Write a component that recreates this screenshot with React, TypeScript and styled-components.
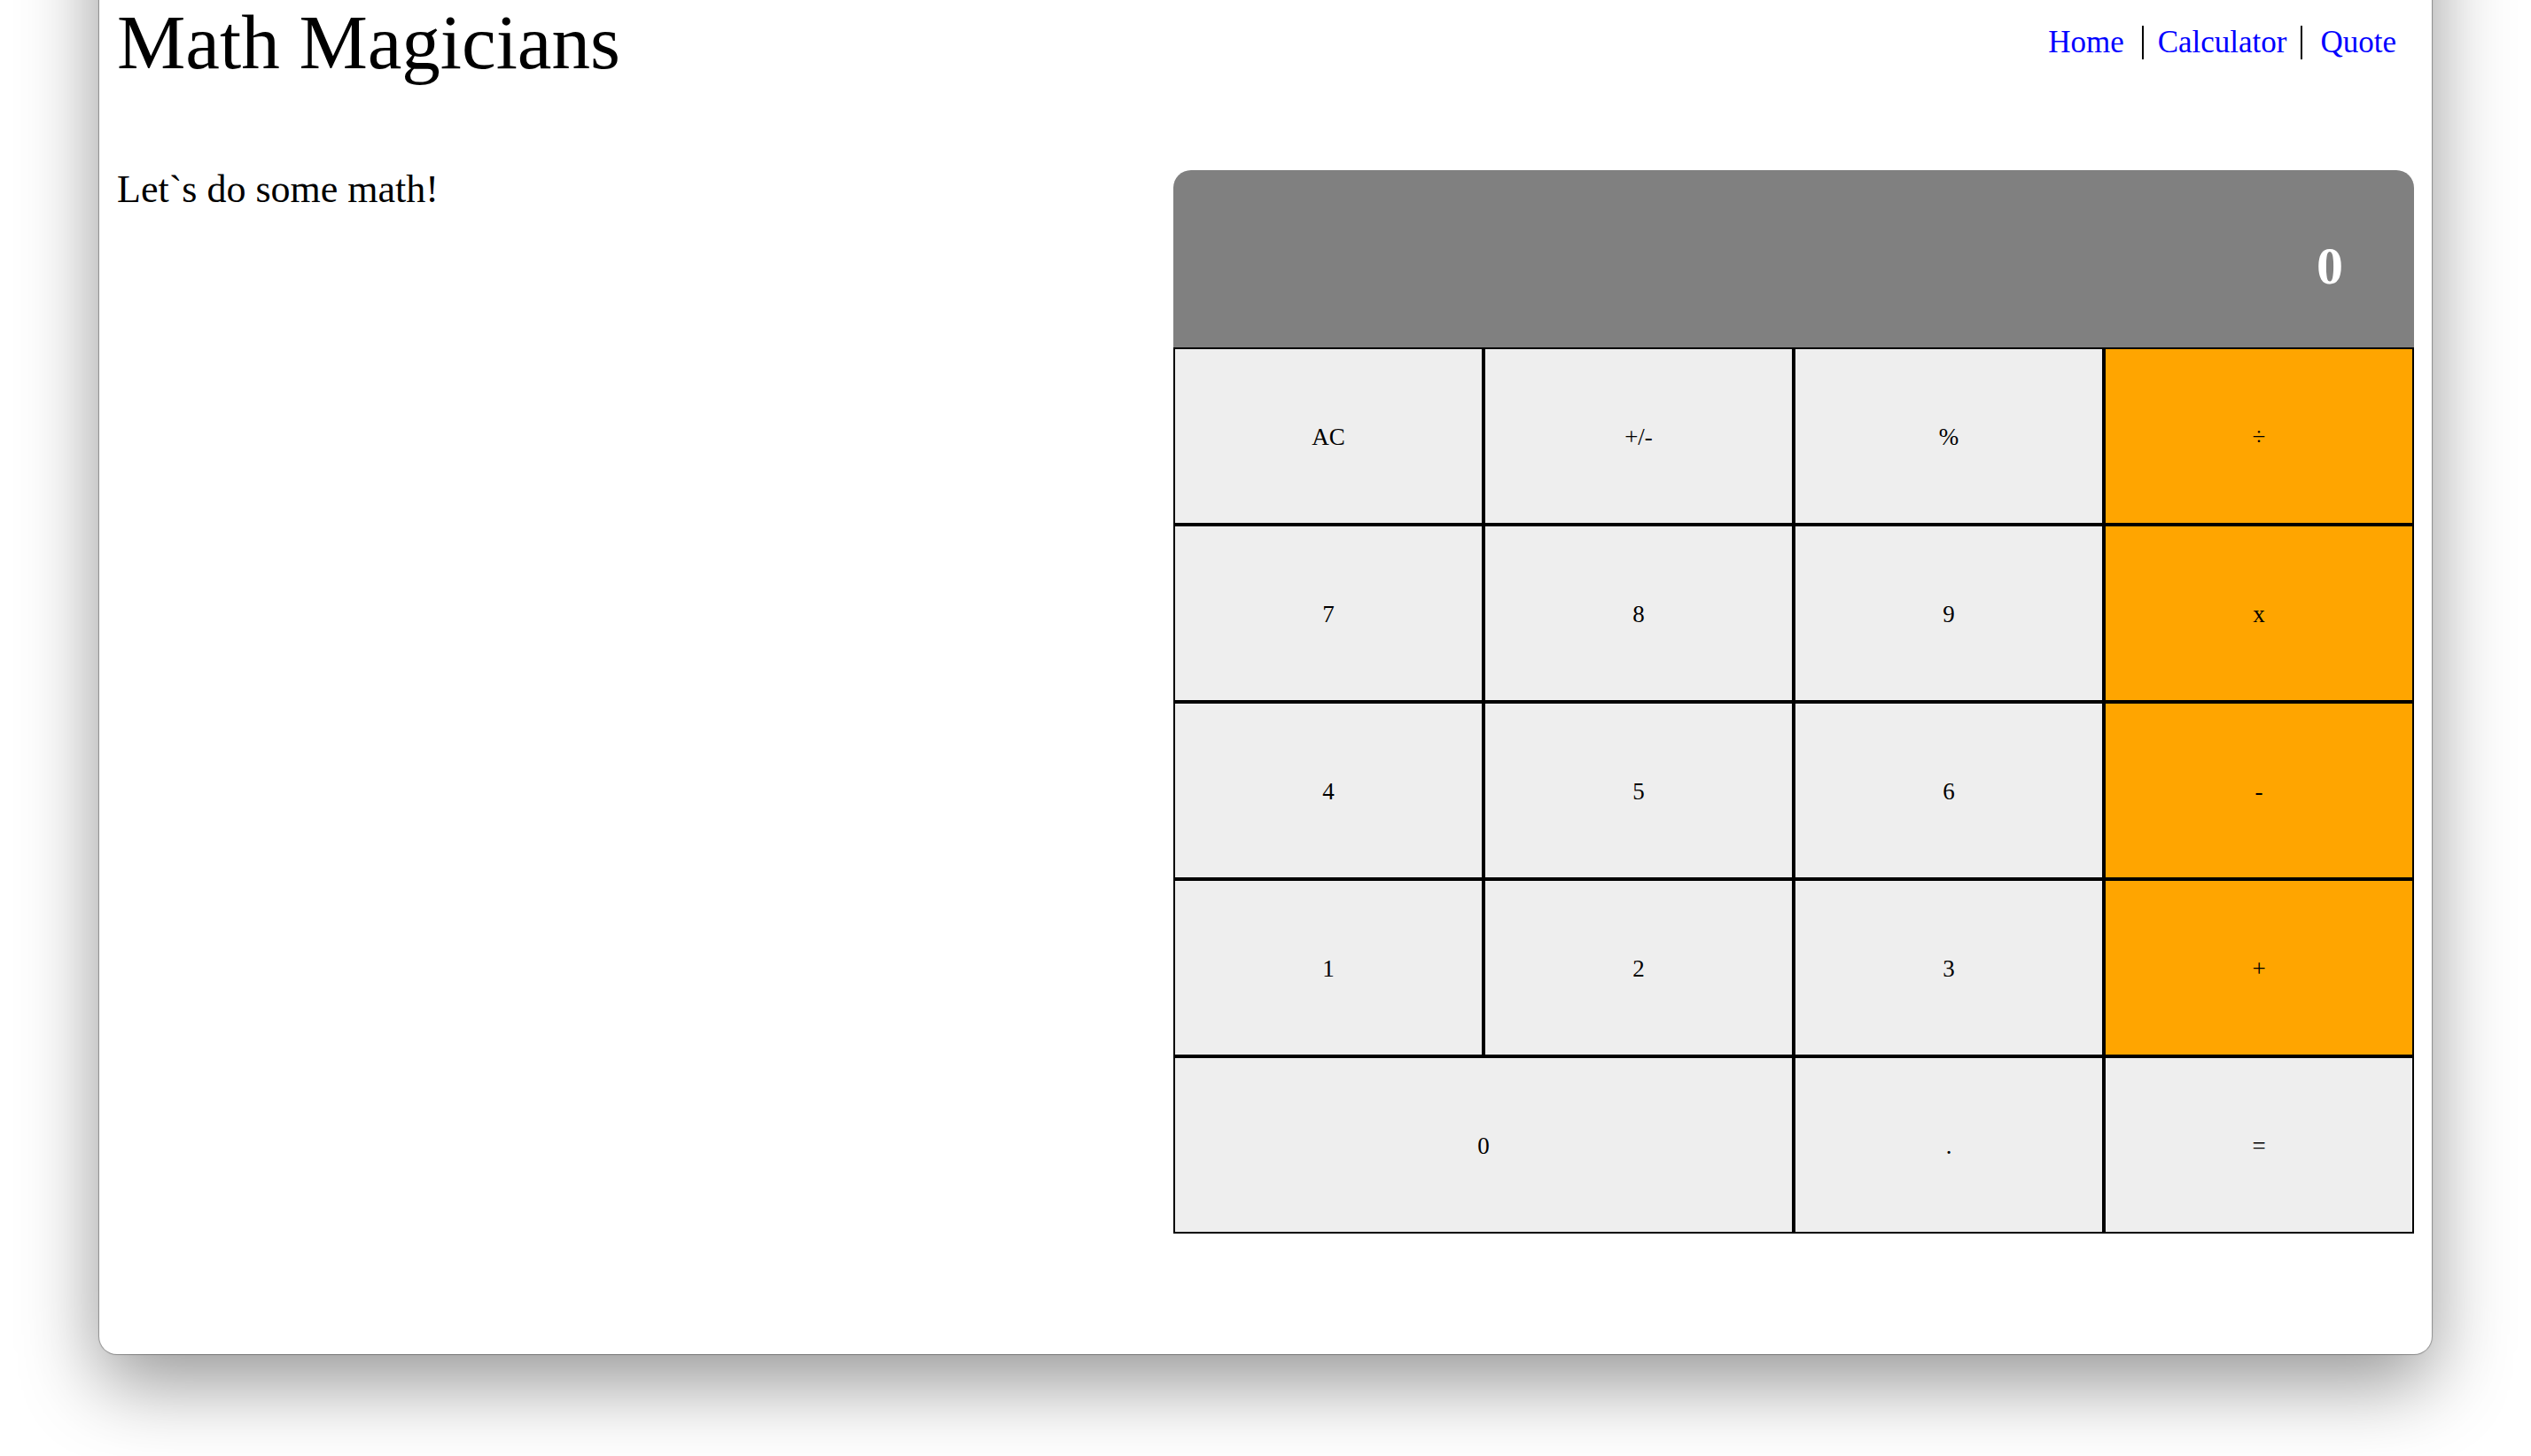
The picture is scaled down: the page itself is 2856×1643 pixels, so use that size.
import { useState } from "react";
import styled, { createGlobalStyle } from "styled-components";

const GlobalStyle = createGlobalStyle`
  * {
    box-sizing: border-box;
  }

  body {
    margin: 0;
    background: #fff;
    color: #000;
    font-family: "Liberation Serif", serif;
  }
`;

const Desktop = styled.div`
  min-height: 100vh;
  padding: 0 112px 115px;
  overflow: hidden;
`;

/* The window continues above the top of the page. */
const Window = styled.div`
  margin-top: -160px;
  padding: 160px 20px 136px;
  background: #fff;
  border-radius: 20px;
  box-shadow:
    0 0 1px 1px rgba(0, 0, 0, 0.3),
    0 32px 88px rgba(0, 0, 0, 0.42);
`;

const Header = styled.header`
  display: flex;
  align-items: center;
  justify-content: space-between;
  height: 96px;
`;

const Title = styled.h1`
  margin: 0;
  font-size: 87px;
  line-height: 92px;
  font-weight: 400;
`;

const Nav = styled.nav`
  display: flex;
  align-items: center;
`;

const NavLink = styled.a<{ $space: number }>`
  padding: 0 ${(p) => p.$space}px;
  color: #0000ff;
  font-size: 35px;
  line-height: 38px;
  text-decoration: none;

  & + & {
    border-left: 2px solid #000;
  }
`;

const Main = styled.main`
  display: grid;
  grid-template-columns: minmax(0, 1192fr) minmax(0, 1400fr);
  margin-top: 96px;
`;

const Lead = styled.h2`
  margin: 0;
  font-size: 44px;
  line-height: 44px;
  font-weight: 400;
`;

const Calculator = styled.section`
  display: grid;
  grid-template-columns: repeat(4, 1fr);
  grid-auto-rows: 200px;
`;

const Display = styled.output`
  grid-column: 1 / -1;
  display: flex;
  align-items: center;
  justify-content: flex-end;
  padding: 16px 80px 0;
  background: #808080;
  border-radius: 20px 20px 0 0;
  color: #fff;
  font-size: 60px;
  font-weight: 700;
`;

const Key = styled.button<{ $operator?: boolean; $wide?: boolean }>`
  grid-column: span ${(p) => (p.$wide ? 2 : 1)};
  padding: 2px 0 0;
  border: 2px solid #000;
  border-radius: 0;
  background: ${(p) => (p.$operator ? "#ffa500" : "#eeeeee")};
  color: #000;
  font-family: inherit;
  font-size: 27px;
`;

const links = [
  { label: "Home", space: 20 },
  { label: "Calculator", space: 16 },
  { label: "Quote", space: 20 },
];

const keys = [
  "AC", "+/-", "%", "÷",
  "7", "8", "9", "x",
  "4", "5", "6", "-",
  "1", "2", "3", "+",
  "0", ".", "=",
];

const operators = ["÷", "x", "-", "+"];

type State = { total: string; next: string; op: string };

const empty: State = { total: "", next: "", op: "" };

function compute({ total, next, op }: State): string {
  const a = Number(total || 0);
  const b = Number(next || 0);
  if (op === "+") return String(a + b);
  if (op === "-") return String(a - b);
  if (op === "x") return String(a * b);
  if (op === "÷") return b === 0 ? "Error" : String(a / b);
  return next || total;
}

function press(state: State, key: string): State {
  const { total, next, op } = state;
  if (key === "AC") return empty;
  if (key === "=") return { total: compute(state), next: "", op: "" };
  if (operators.includes(key)) {
    return { total: next ? compute(state) : total, next: "", op: key };
  }
  if (key === "+/-" || key === "%") {
    const change = (v: string) => String(key === "%" ? Number(v) / 100 : -Number(v));
    if (next) return { ...state, next: change(next) };
    return total ? { ...state, total: change(total) } : state;
  }
  if (key === ".") return next.includes(".") ? state : { ...state, next: (next || "0") + "." };
  return { total: op ? total : "", next: next === "0" ? key : next + key, op };
}

export default function App() {
  const [state, setState] = useState<State>(empty);

  return (
    <>
      <GlobalStyle />
      <Desktop>
        <Window>
          <Header>
            <Title>Math Magicians</Title>
            <Nav>
              {links.map((link) => (
                <NavLink key={link.label} href={`#${link.label.toLowerCase()}`} $space={link.space}>
                  {link.label}
                </NavLink>
              ))}
            </Nav>
          </Header>
          <Main>
            <Lead>Let`s do some math!</Lead>
            <Calculator aria-label="Calculator">
              <Display>{state.next || state.total || "0"}</Display>
              {keys.map((key) => (
                <Key
                  key={key}
                  type="button"
                  $operator={operators.includes(key)}
                  $wide={key === "0"}
                  onClick={() => setState((s) => press(s, key))}
                >
                  {key}
                </Key>
              ))}
            </Calculator>
          </Main>
        </Window>
      </Desktop>
    </>
  );
}
